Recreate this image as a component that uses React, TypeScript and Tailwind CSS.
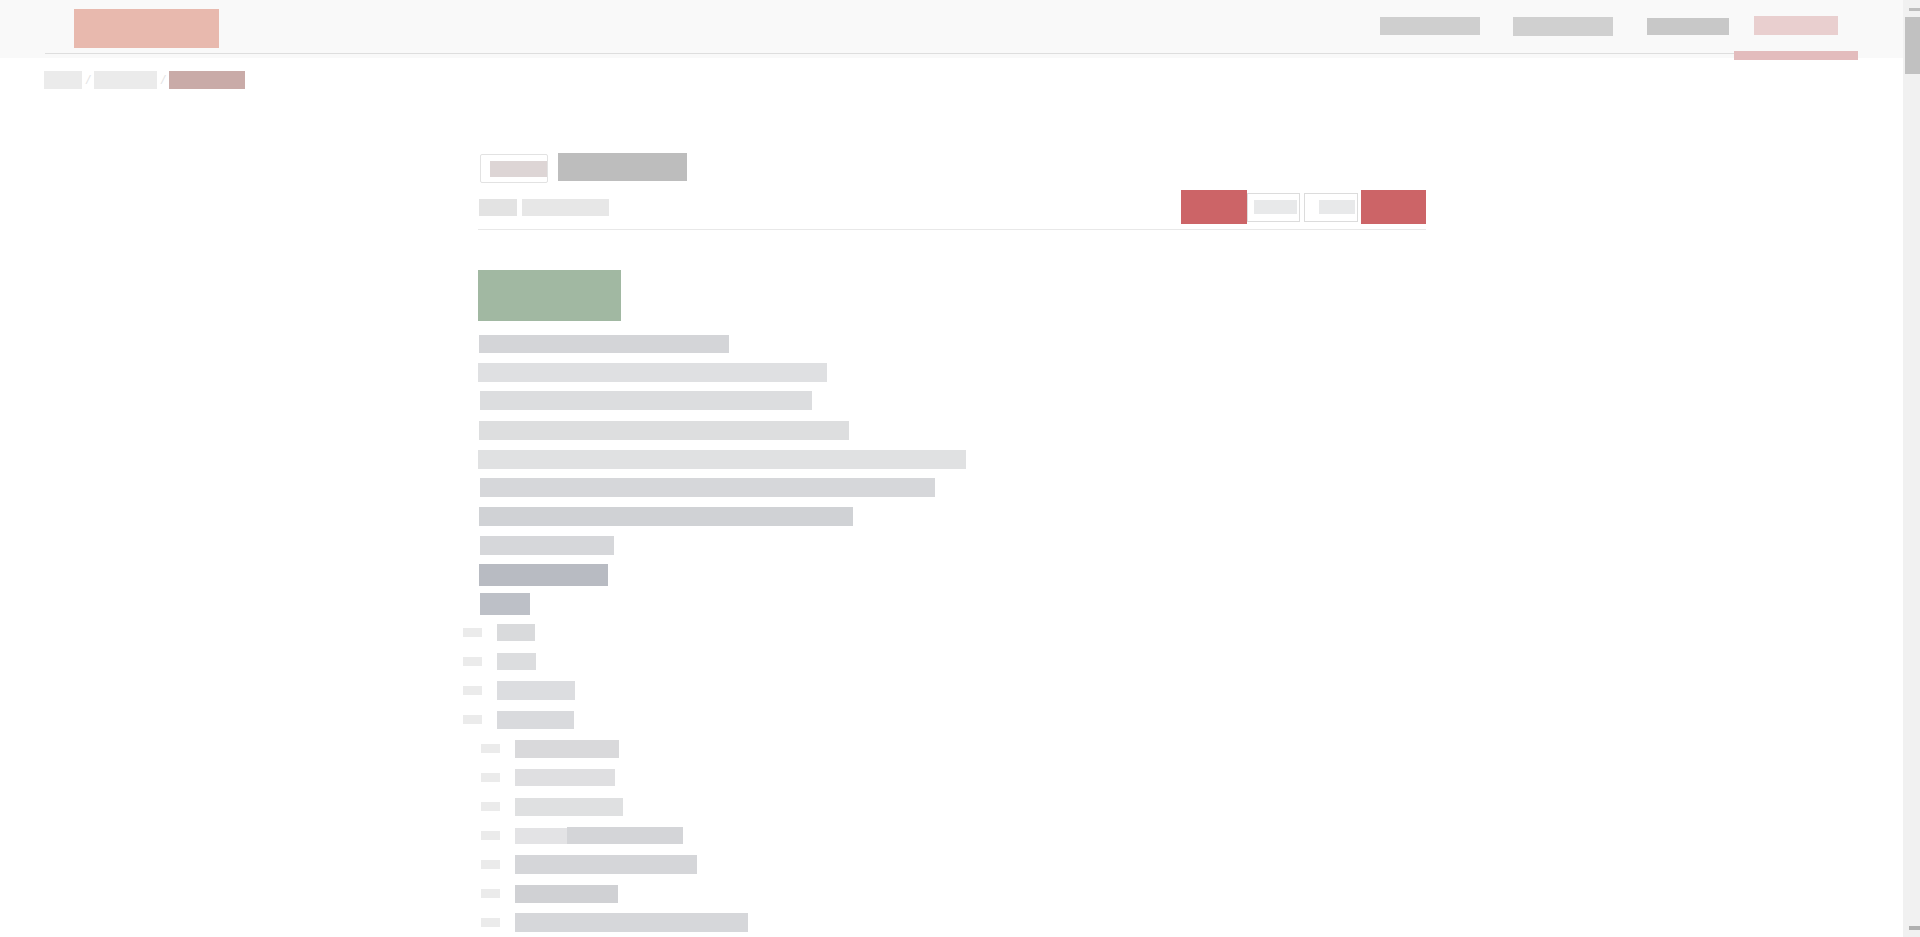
const navItems = [
  { w: "w-[100px]", h: "h-[18px]", c: "bg-[#cfcfcf]", ml: "ml-0" },
  { w: "w-[100px]", h: "h-[19px]", c: "bg-[#d0d0d0]", ml: "ml-[33px]" },
  { w: "w-[82px]", h: "h-[17px]", c: "bg-[#c8c8c8]", ml: "ml-[34px]" },
];

const bars = [
  "ml-[1px] w-[250px] h-[18px] mt-[14px] bg-[#d4d5d8]",
  "ml-0 w-[349px] h-[19px] mt-[10px] bg-[#dfe0e2]",
  "ml-[2px] w-[332px] h-[19px] mt-[9px] bg-[#dcdddf]",
  "ml-[1px] w-[370px] h-[19px] mt-[11px] bg-[#dddedf]",
  "ml-0 w-[488px] h-[19px] mt-[10px] bg-[#e0e1e2]",
  "ml-[2px] w-[455px] h-[19px] mt-[9px] bg-[#d6d7da]",
  "ml-[1px] w-[374px] h-[19px] mt-[10px] bg-[#d0d2d5]",
  "ml-[2px] w-[134px] h-[19px] mt-[10px] bg-[#d6d7da]",
  "ml-[1px] w-[129px] h-[22px] mt-[9px] bg-[#b8bbc2]",
  "ml-[2px] w-[50px] h-[22px] mt-[7px] bg-[#bdc0c7]",
];

const topRows = [
  "w-[38px] h-[17px] bg-[#d9dadc]",
  "w-[39px] h-[17px] bg-[#dcdddf]",
  "w-[78px] h-[19px] bg-[#dcdde0]",
  "w-[77px] h-[18px] bg-[#d9dadd]",
];

const childRows = [
  "w-[104px] h-[18px] bg-[#d9d9db]",
  "w-[100px] h-[17px] bg-[#dfdfe1]",
  "w-[108px] h-[18px] bg-[#dfe0e1]",
  "split",
  "w-[182px] h-[19px] bg-[#d5d6d9]",
  "w-[103px] h-[18px] bg-[#d0d1d4]",
  "w-[233px] h-[19px] bg-[#d6d7da]",
];

// rest of the list, below the fold
const moreWidths = [
  "w-[96px]", "w-[142px]", "w-[188px]", "w-[74px]", "w-[121px]", "w-[210px]",
  "w-[158px]", "w-[88px]", "w-[134px]", "w-[176px]", "w-[112px]", "w-[246px]",
];
const moreColors = ["bg-[#d9dadc]", "bg-[#dfe0e1]", "bg-[#d4d5d8]", "bg-[#dcdddf]"];

const Tick = ({ className = "" }: { className?: string }) => (
  <div className={`w-[19px] h-[9px] bg-[#ebebeb] shrink-0 ${className}`} />
);

const Scrollbar = () => (
  <aside className="w-[17px] shrink-0 h-screen bg-[#f1f1f1] flex flex-col items-end">
    <div className="mt-[8px] w-[11px] h-[3px] bg-[#bdbdbd]" />
    <div className="mt-[6px] w-[15px] h-[57px] bg-[#c1c1c1]" />
    <div className="mt-auto mb-[7px] w-[11px] h-[4px] bg-[#b0b0b0]" />
  </aside>
);

export default function App() {
  return (
    <div className="flex h-screen bg-white font-['Liberation_Sans',Arial,sans-serif]">
      <div className="flex-1 min-w-0 h-screen overflow-y-auto">
        <header className="relative h-[58px] bg-[#f9f9f9] px-[45px]">
          <div className="flex h-[53px] items-start">
            <div className="ml-[29px] mt-[9px] w-[145px] h-[39px] bg-[#e8b9ae]" />
            <nav className="ml-auto flex items-center h-[53px] pb-[1px]">
              {navItems.map((n, i) => (
                <div key={i} className={`${n.w} ${n.h} ${n.c} ${n.ml}`} />
              ))}
              <div className="relative ml-[5px] px-[20px] h-[53px] flex items-center pb-[1px]">
                <div className="w-[84px] h-[19px] bg-[#e9cfcf]" />
                <div className="absolute left-0 right-0 top-[51px] h-[9px] bg-[#e3bcbd]" />
              </div>
            </nav>
          </div>
          <div className="h-px bg-[#dedede]" />
        </header>

        <div className="flex items-center mt-[13px] ml-[44px] h-[18px] text-[13px] text-[#e4e4e4]">
          <div className="w-[38px] h-[18px] bg-[#ebebeb]" />
          <span className="w-[12px] text-center italic">/</span>
          <div className="w-[63px] h-[18px] bg-[#ebebeb]" />
          <span className="w-[12px] text-center italic">/</span>
          <div className="w-[76px] h-[18px] bg-[#c9aba8]" />
        </div>

        <main className="w-[948px] mx-auto pt-[64px] pb-[40px]">
          <div className="flex items-start h-[30px]">
            <div className="ml-[2px] mt-[1px] w-[68px] h-[29px] border border-[#e2e2e2] rounded-[2px] flex items-center justify-end">
              <div className="w-[57px] h-[16px] bg-[#ddd5d5]" />
            </div>
            <div className="ml-[10px] w-[129px] h-[28px] bg-[#bdbdbd]" />
          </div>

          <div className="flex items-center justify-between mt-[7px] pb-[5px] border-b border-[#e8e8e8]">
            <div className="flex items-center">
              <div className="ml-[1px] w-[38px] h-[17px] bg-[#e3e3e3]" />
              <div className="ml-[5px] w-[87px] h-[17px] bg-[#e7e7e7]" />
            </div>
            <div className="flex items-center">
              <div className="w-[66px] h-[34px] bg-[#cc6467]" />
              <div className="w-[53px] h-[29px] border border-[#dcdcdc] flex items-center justify-end pr-[2px]">
                <div className="w-[43px] h-[14px] bg-[#e8e9ea]" />
              </div>
              <div className="ml-[4px] w-[54px] h-[29px] border border-[#dcdcdc] flex items-center justify-end pr-[2px]">
                <div className="w-[36px] h-[14px] bg-[#e8e9ea]" />
              </div>
              <div className="ml-[3px] w-[65px] h-[34px] bg-[#cc6467]" />
            </div>
          </div>

          <div className="mt-[40px] w-[143px] h-[51px] bg-[#a1b8a2]" />

          {bars.map((b, i) => (
            <div key={i} className={b} />
          ))}

          <div className="mt-[3px]">
            {topRows.map((r, i) => (
              <div key={i} className="flex items-center h-[29px]">
                <Tick className="ml-[-15px]" />
                <div className={`ml-[15px] ${r}`} />
              </div>
            ))}
            {childRows.map((r, i) => (
              <div key={i} className="flex items-center h-[29px]">
                <Tick className="ml-[3px]" />
                {r === "split" ? (
                  <div className="ml-[15px] flex items-end h-[17px]">
                    <div className="w-[52px] h-[16px] bg-[#e3e3e5]" />
                    <div className="w-[116px] h-[17px] bg-[#d4d5d8]" />
                  </div>
                ) : (
                  <div className={`ml-[15px] ${r}`} />
                )}
              </div>
            ))}
            {Array.from({ length: 470 }).map((_, i) => (
              <div key={i} className="flex items-center h-[29px]">
                <Tick className={i % 9 < 3 ? "ml-[-15px]" : "ml-[3px]"} />
                <div
                  className={`ml-[15px] h-[18px] ${moreWidths[(i * 7) % moreWidths.length]} ${
                    moreColors[(i * 5) % moreColors.length]
                  }`}
                />
              </div>
            ))}
          </div>
        </main>
      </div>
      <Scrollbar />
    </div>
  );
}
